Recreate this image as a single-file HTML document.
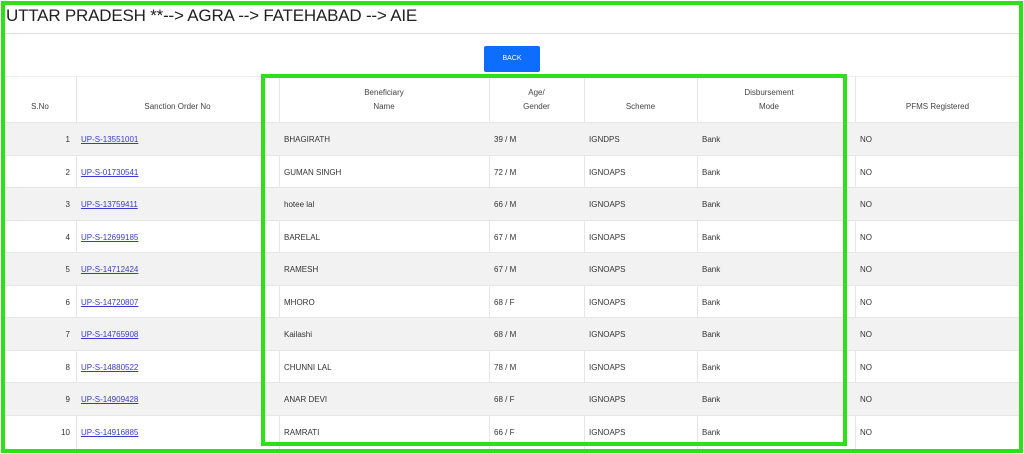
<!DOCTYPE html>
<html><head><meta charset="utf-8"><style>
body{margin:0;width:1024px;height:454px;background:#fff;position:relative;overflow:hidden;font-family:"Liberation Sans",sans-serif;color:#333}
.a{position:absolute}
.title{left:6px;top:6px;font-size:17px;color:#222;white-space:nowrap;letter-spacing:-0.2px}
.hr{left:4px;right:4px;top:33px;height:1px;background:#ddd}
.btn{left:484px;top:46px;width:56px;height:26px;background:#0d6efd;color:#fff;font-size:7px;text-align:center;line-height:26px;border-radius:2px}
.row{position:absolute;left:4px;right:4px;height:33px;border-top:1px solid #e6e6e6}
.row.g{background:#f2f2f2}
.c{position:absolute;top:0;height:100%;display:flex;align-items:center;font-size:8px;box-sizing:border-box;padding-left:5px;white-space:nowrap}
.h .c{justify-content:center;align-items:flex-end;padding-bottom:9px;text-align:center;line-height:14px;padding-left:0;color:#444}
.v{position:absolute;top:76px;bottom:0;width:1px;background:#e6e6e6}
a{color:#3a3ad0;text-decoration:underline}
.gb{position:absolute;border:4px solid #2ee01a;box-sizing:border-box}
</style></head><body>
<div class="a title">UTTAR PRADESH **--&gt; AGRA --&gt; FATEHABAD --&gt; AIE</div>
<div class="a hr"></div>
<div class="a btn">BACK</div>

<div class="row h" style="top:76px;height:46px;border-top:1px solid #eee">
<div class="c" style="left:0;width:72px">S.No</div>
<div class="c" style="left:72px;width:203px">Sanction Order No</div>
<div class="c" style="left:275px;width:210px">Beneficiary<br>Name</div>
<div class="c" style="left:485px;width:95px">Age/<br>Gender</div>
<div class="c" style="left:580px;width:113px">Scheme</div>
<div class="c" style="left:693px;width:144px">Disbursement<br>Mode</div>
<div class="c" style="left:851px;width:165px">PFMS Registered</div>
</div>

<div class="v" style="left:76px"></div>
<div class="v" style="left:279px"></div>
<div class="v" style="left:489px"></div>
<div class="v" style="left:584px"></div>
<div class="v" style="left:697px"></div>
<div class="v" style="left:855px"></div>

<div class="row g" style="top:122px"><div class="c" style="left:0;width:72px;justify-content:flex-end;padding-right:6px">1</div><div class="c" style="left:72px"><a>UP-S-13551001</a></div><div class="c" style="left:275px">BHAGIRATH</div><div class="c" style="left:485px">39 / M</div><div class="c" style="left:580px">IGNDPS</div><div class="c" style="left:693px">Bank</div><div class="c" style="left:851px">NO</div></div>
<div class="row" style="top:154.5px"><div class="c" style="left:0;width:72px;justify-content:flex-end;padding-right:6px">2</div><div class="c" style="left:72px"><a>UP-S-01730541</a></div><div class="c" style="left:275px">GUMAN SINGH</div><div class="c" style="left:485px">72 / M</div><div class="c" style="left:580px">IGNOAPS</div><div class="c" style="left:693px">Bank</div><div class="c" style="left:851px">NO</div></div>
<div class="row g" style="top:187px"><div class="c" style="left:0;width:72px;justify-content:flex-end;padding-right:6px">3</div><div class="c" style="left:72px"><a>UP-S-13759411</a></div><div class="c" style="left:275px">hotee lal</div><div class="c" style="left:485px">66 / M</div><div class="c" style="left:580px">IGNOAPS</div><div class="c" style="left:693px">Bank</div><div class="c" style="left:851px">NO</div></div>
<div class="row" style="top:219.5px"><div class="c" style="left:0;width:72px;justify-content:flex-end;padding-right:6px">4</div><div class="c" style="left:72px"><a>UP-S-12699185</a></div><div class="c" style="left:275px">BARELAL</div><div class="c" style="left:485px">67 / M</div><div class="c" style="left:580px">IGNOAPS</div><div class="c" style="left:693px">Bank</div><div class="c" style="left:851px">NO</div></div>
<div class="row g" style="top:252px"><div class="c" style="left:0;width:72px;justify-content:flex-end;padding-right:6px">5</div><div class="c" style="left:72px"><a>UP-S-14712424</a></div><div class="c" style="left:275px">RAMESH</div><div class="c" style="left:485px">67 / M</div><div class="c" style="left:580px">IGNOAPS</div><div class="c" style="left:693px">Bank</div><div class="c" style="left:851px">NO</div></div>
<div class="row" style="top:284.5px"><div class="c" style="left:0;width:72px;justify-content:flex-end;padding-right:6px">6</div><div class="c" style="left:72px"><a>UP-S-14720807</a></div><div class="c" style="left:275px">MHORO</div><div class="c" style="left:485px">68 / F</div><div class="c" style="left:580px">IGNOAPS</div><div class="c" style="left:693px">Bank</div><div class="c" style="left:851px">NO</div></div>
<div class="row g" style="top:317px"><div class="c" style="left:0;width:72px;justify-content:flex-end;padding-right:6px">7</div><div class="c" style="left:72px"><a>UP-S-14765908</a></div><div class="c" style="left:275px">Kailashi</div><div class="c" style="left:485px">68 / M</div><div class="c" style="left:580px">IGNOAPS</div><div class="c" style="left:693px">Bank</div><div class="c" style="left:851px">NO</div></div>
<div class="row" style="top:349.5px"><div class="c" style="left:0;width:72px;justify-content:flex-end;padding-right:6px">8</div><div class="c" style="left:72px"><a>UP-S-14880522</a></div><div class="c" style="left:275px">CHUNNI LAL</div><div class="c" style="left:485px">78 / M</div><div class="c" style="left:580px">IGNOAPS</div><div class="c" style="left:693px">Bank</div><div class="c" style="left:851px">NO</div></div>
<div class="row g" style="top:382px"><div class="c" style="left:0;width:72px;justify-content:flex-end;padding-right:6px">9</div><div class="c" style="left:72px"><a>UP-S-14909428</a></div><div class="c" style="left:275px">ANAR DEVI</div><div class="c" style="left:485px">68 / F</div><div class="c" style="left:580px">IGNOAPS</div><div class="c" style="left:693px">Bank</div><div class="c" style="left:851px">NO</div></div>
<div class="row" style="top:414.5px"><div class="c" style="left:0;width:72px;justify-content:flex-end;padding-right:6px">10</div><div class="c" style="left:72px"><a>UP-S-14916885</a></div><div class="c" style="left:275px">RAMRATI</div><div class="c" style="left:485px">66 / F</div><div class="c" style="left:580px">IGNOAPS</div><div class="c" style="left:693px">Bank</div><div class="c" style="left:851px">NO</div></div>

<div class="gb" style="left:261px;top:74px;width:586px;height:372px"></div>
<div class="gb" style="left:1px;top:1px;width:1022px;height:452px"></div>
</body></html>
